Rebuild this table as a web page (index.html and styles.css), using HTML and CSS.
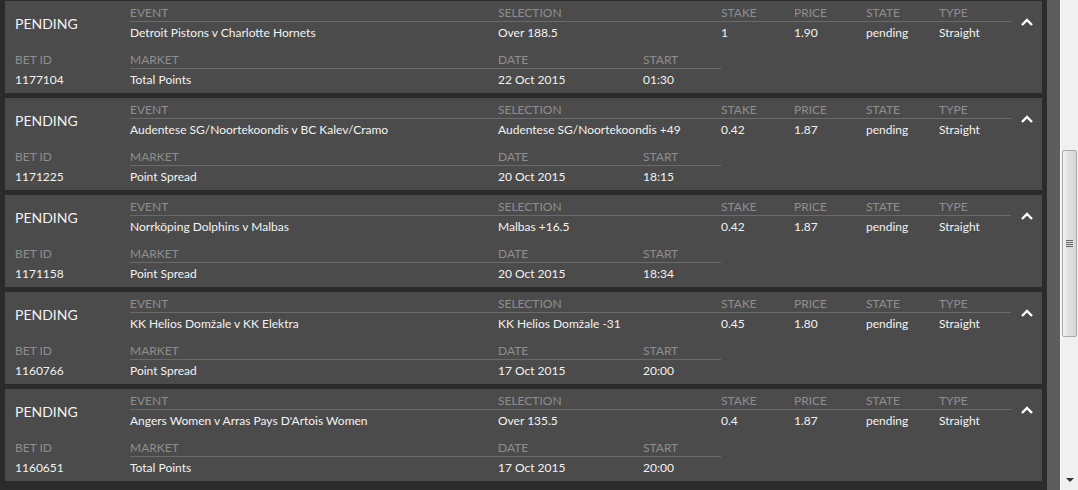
FILE: index.html
```html
<!DOCTYPE html>
<html>
<head>
  <title>Bets</title>
  <link rel="stylesheet" href="styles.css">
</head>
<body>
  <div id="list">

    <div class="bet">
      <div class="status">PENDING</div>
      <div class="lbl top">EVENT</div>
      <div class="lbl top sel">SELECTION</div>
      <div class="lbl top">STAKE</div>
      <div class="lbl top">PRICE</div>
      <div class="lbl top">STATE</div>
      <div class="lbl top">TYPE</div>
      <div class="chev"><svg width="12" height="8" viewBox="0 0 12 8"><polyline points="1,7 6,2 11,7" /></svg></div>
      <div class="val">Detroit Pistons v Charlotte Hornets</div>
      <div class="val sel">Over 188.5</div>
      <div class="val">1</div>
      <div class="val">1.90</div>
      <div class="val">pending</div>
      <div class="val">Straight</div>
      <div class="lbl bot first">BET ID</div>
      <div class="lbl bot line">MARKET</div>
      <div class="lbl bot line">DATE</div>
      <div class="lbl bot line">START</div>
      <div class="val first">1177104</div>
      <div class="val">Total Points</div>
      <div class="val">22 Oct 2015</div>
      <div class="val">01:30</div>
    </div>

    <div class="bet">
      <div class="status">PENDING</div>
      <div class="lbl top">EVENT</div>
      <div class="lbl top sel">SELECTION</div>
      <div class="lbl top">STAKE</div>
      <div class="lbl top">PRICE</div>
      <div class="lbl top">STATE</div>
      <div class="lbl top">TYPE</div>
      <div class="chev"><svg width="12" height="8" viewBox="0 0 12 8"><polyline points="1,7 6,2 11,7" /></svg></div>
      <div class="val">Audentese SG/Noortekoondis v BC Kalev/Cramo</div>
      <div class="val sel">Audentese SG/Noortekoondis +49</div>
      <div class="val">0.42</div>
      <div class="val">1.87</div>
      <div class="val">pending</div>
      <div class="val">Straight</div>
      <div class="lbl bot first">BET ID</div>
      <div class="lbl bot line">MARKET</div>
      <div class="lbl bot line">DATE</div>
      <div class="lbl bot line">START</div>
      <div class="val first">1171225</div>
      <div class="val">Point Spread</div>
      <div class="val">20 Oct 2015</div>
      <div class="val">18:15</div>
    </div>

    <div class="bet">
      <div class="status">PENDING</div>
      <div class="lbl top">EVENT</div>
      <div class="lbl top sel">SELECTION</div>
      <div class="lbl top">STAKE</div>
      <div class="lbl top">PRICE</div>
      <div class="lbl top">STATE</div>
      <div class="lbl top">TYPE</div>
      <div class="chev"><svg width="12" height="8" viewBox="0 0 12 8"><polyline points="1,7 6,2 11,7" /></svg></div>
      <div class="val">Norrköping Dolphins v Malbas</div>
      <div class="val sel">Malbas +16.5</div>
      <div class="val">0.42</div>
      <div class="val">1.87</div>
      <div class="val">pending</div>
      <div class="val">Straight</div>
      <div class="lbl bot first">BET ID</div>
      <div class="lbl bot line">MARKET</div>
      <div class="lbl bot line">DATE</div>
      <div class="lbl bot line">START</div>
      <div class="val first">1171158</div>
      <div class="val">Point Spread</div>
      <div class="val">20 Oct 2015</div>
      <div class="val">18:34</div>
    </div>

    <div class="bet">
      <div class="status">PENDING</div>
      <div class="lbl top">EVENT</div>
      <div class="lbl top sel">SELECTION</div>
      <div class="lbl top">STAKE</div>
      <div class="lbl top">PRICE</div>
      <div class="lbl top">STATE</div>
      <div class="lbl top">TYPE</div>
      <div class="chev"><svg width="12" height="8" viewBox="0 0 12 8"><polyline points="1,7 6,2 11,7" /></svg></div>
      <div class="val">KK Helios Domžale v KK Elektra</div>
      <div class="val sel">KK Helios Domžale -31</div>
      <div class="val">0.45</div>
      <div class="val">1.80</div>
      <div class="val">pending</div>
      <div class="val">Straight</div>
      <div class="lbl bot first">BET ID</div>
      <div class="lbl bot line">MARKET</div>
      <div class="lbl bot line">DATE</div>
      <div class="lbl bot line">START</div>
      <div class="val first">1160766</div>
      <div class="val">Point Spread</div>
      <div class="val">17 Oct 2015</div>
      <div class="val">20:00</div>
    </div>

    <div class="bet">
      <div class="status">PENDING</div>
      <div class="lbl top">EVENT</div>
      <div class="lbl top sel">SELECTION</div>
      <div class="lbl top">STAKE</div>
      <div class="lbl top">PRICE</div>
      <div class="lbl top">STATE</div>
      <div class="lbl top">TYPE</div>
      <div class="chev"><svg width="12" height="8" viewBox="0 0 12 8"><polyline points="1,7 6,2 11,7" /></svg></div>
      <div class="val">Angers Women v Arras Pays D'Artois Women</div>
      <div class="val sel">Over 135.5</div>
      <div class="val">0.4</div>
      <div class="val">1.87</div>
      <div class="val">pending</div>
      <div class="val">Straight</div>
      <div class="lbl bot first">BET ID</div>
      <div class="lbl bot line">MARKET</div>
      <div class="lbl bot line">DATE</div>
      <div class="lbl bot line">START</div>
      <div class="val first">1160651</div>
      <div class="val">Total Points</div>
      <div class="val">17 Oct 2015</div>
      <div class="val">20:00</div>
    </div>

  </div>
  <div id="strip"></div>
  <div id="scrollbar">
    <div class="thumb"><div class="grip"></div></div>
    <div class="arrow"></div>
  </div>
</body>
</html>
```

FILE: styles.css
```css
* {
  margin: 0;
  padding: 0;
  box-sizing: border-box;
}
html, body {
  height: 490px;
  overflow: hidden;
}
body {
  display: flex;
  background-color: #2b2b2b;
  font-family: Lato, "Liberation Sans", sans-serif;
  font-size: 12px;
  color: #f2f2f2;
}
#list {
  width: 1047px;
  padding: 1px 5px 0 5px;
}
.bet {
  height: 92px;
  margin-bottom: 5px;
  padding: 0 0 2px 10px;
  background-color: #4b4b4b;
  display: grid;
  grid-template-columns: 115px 368px 145px 78px 73px 72px 73px 72px 1fr;
  grid-template-rows: 21px 22px 25px 22px;
}
.status {
  grid-row: 1 / 3;
  font-size: 14px;
  align-self: center;
  padding-top: 1px;
}
.lbl {
  color: #8e8e8e;
  line-height: 16px;
  white-space: nowrap;
}
.lbl.top {
  padding-top: 4px;
  border-bottom: 1px solid #6b6b6b;
}
.lbl.bot {
  padding-top: 8px;
}
.lbl.bot.line {
  border-bottom: 1px solid #6b6b6b;
}
.first {
  grid-column: 1;
}
.sel {
  grid-column: span 2;
}
.val {
  line-height: 22px;
  white-space: nowrap;
}
.chev {
  grid-column: 9;
  grid-row: 1 / 3;
  display: flex;
  justify-content: center;
  align-items: center;
  padding-bottom: 1px;
}
.chev polyline {
  fill: none;
  stroke: #fff;
  stroke-width: 2.4;
}
#strip {
  width: 13px;
  background-color: #5d5d5d;
}
#scrollbar {
  width: 18px;
  background-color: #f0f0f0;
  border-left: 1px solid #fbfbfb;
  display: flex;
  flex-direction: column;
  align-items: center;
  padding-top: 150px;
}
.thumb {
  width: 15px;
  height: 187px;
  border: 1px solid #a9a9a9;
  border-radius: 2px;
  background: linear-gradient(to right, #f2f2f2, #e2e2e2 40%, #d6d6d6);
  display: flex;
  justify-content: center;
  align-items: center;
}
.grip {
  width: 7px;
  height: 8px;
  background: repeating-linear-gradient(to bottom, #6a6a6a 0, #6a6a6a 1px, #dcdcdc 1px, #dcdcdc 2px);
}
.arrow {
  margin-top: auto;
  margin-bottom: 8px;
  width: 0;
  height: 0;
  border-left: 4px solid transparent;
  border-right: 4px solid transparent;
  border-top: 4px solid #333;
}
```
